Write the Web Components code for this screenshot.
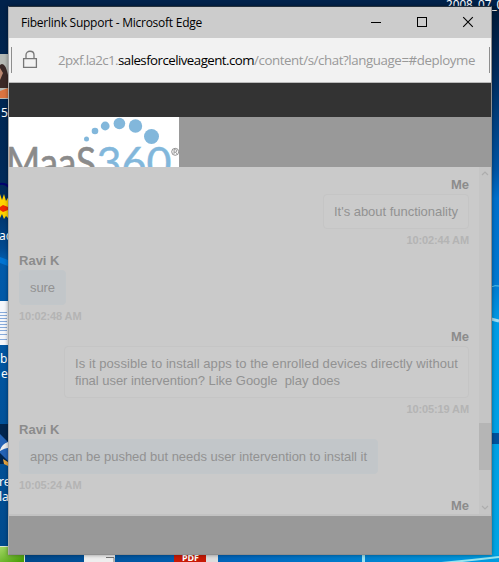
<!DOCTYPE html>
<html lang="en"><head><meta charset="utf-8"><title>Fiberlink Support</title>
<style>html,body{margin:0;width:499px;height:562px;overflow:hidden}</style></head>
<body><desk-top><browser-window></browser-window></desk-top>
<script>
const define=(name,html,ready)=>customElements.define(name,class extends HTMLElement{
  connectedCallback(){
    if(this.shadowRoot)return;
    const t=document.createElement('template');t.innerHTML=html;
    this.attachShadow({mode:'open'}).append(t.content.cloneNode(true));
    if(ready)ready.call(this,this.shadowRoot);
  }
});

// Text whose tracking is adjusted so it spans the width given in "w".
define('fit-text',`<style>:host{display:inline-block;white-space:pre}span{display:inline-block}</style><span><slot></slot></span>`,function(r){
  const s=r.querySelector('span'),w=+this.getAttribute('w');
  const n=this.textContent.length;
  s.style.letterSpacing=((w-s.getBoundingClientRect().width)/n)+'px';
});

define('title-bar',`<style>
:host{display:flex;height:31px;background:#ccc;align-items:center;color:#000;font:12px "Open Sans","Noto Sans",sans-serif}
fit-text{margin-left:12px;flex:1;line-height:30px}
svg{display:block}
</style><fit-text w="181">Fiberlink Support - Microsoft Edge</fit-text>
<svg width="129" height="31" fill="none" stroke="#000"><path d="M9 15.500h10M55.500 10.500h9v9h-9z" shape-rendering="crispEdges"/><path d="M101.200 10.200l9.600 9.600M110.800 10.200l-9.600 9.600" stroke-width="1.100"/></svg>`);

define('address-bar',`<style>
:host{display:flex;height:44px;box-sizing:content-box;background:#f2f2f2;border-bottom:1px solid #bababa;align-items:center;color:#999;font:13.300px "Open Sans","Noto Sans",sans-serif}
.edge{width:1px;height:26px;background:#8e8e8e;margin-left:2px;flex:none}
svg{flex:none;margin-left:8px}
.url{display:flex;width:418px;margin-left:20px;overflow:hidden;white-space:nowrap;line-height:24px}
.url fit-text{flex:none}
b{font-weight:400;color:#000;display:flex}
.r{margin-left:13px}
</style><i class="edge"></i>
<svg width="18" height="22" fill="none" stroke="#777" stroke-width="1.300"><path d="M3.600 9.600h12.800v8.800H3.600z"/><path d="M6 9.500V6c0-5 8-5 8 0v3.500"/></svg>
<div class="url"><fit-text w="60">2pxf.la2c1.</fit-text><b><fit-text w="136">salesforceliveagent.com</fit-text></b><fit-text w="221">/content/s/chat?language=#deployme</fit-text></div><i class="edge r"></i>`);

define('maas-logo',`<style>:host{display:block;width:170px;height:50px;background:#fff;overflow:hidden}svg{display:block}</style>
<svg width="170" height="50" font-family="Lato,sans-serif">
<g fill="#82b7db"><circle cx="77.500" cy="22" r="2.500"/><circle cx="86" cy="14" r="3.300"/><circle cx="96.200" cy="9" r="4.400"/><circle cx="110.400" cy="6.500" r="5.800"/><circle cx="126.500" cy="9" r="6.700"/><circle cx="142.500" cy="19.500" r="7.500"/></g>
<text x="-3" y="61" font-size="42" fill="#8b8b8b" stroke="#8b8b8b" stroke-width=".6" textLength="90" lengthAdjust="spacingAndGlyphs">MaaS</text>
<text x="87.500" y="60.500" font-size="42" fill="#82b7db" stroke="#82b7db" stroke-width=".4" textLength="75" lengthAdjust="spacingAndGlyphs">360</text>
<circle cx="166.200" cy="34.800" r="3.500" fill="none" stroke="#777" stroke-width=".8"/><path d="M165 37v-4.300h1.500q1.300 0 1.300 1.200t-1.300 1.200H165m1.500 0l1.500 1.900" fill="none" stroke="#777" stroke-width=".7"/></svg>`);

define('chat-message',`<style>
:host{display:flex;flex-direction:column;align-items:flex-start;height:76px;flex:none;color:#929292;font:13px/17px "Liberation Sans",Arial,sans-serif}
:host([me]){align-items:flex-end}
:host([tall]){height:93px}
.name{font-weight:700;font-size:13px;line-height:18px;color:#8c8c8c;height:18px}
.bubble{box-sizing:border-box;padding:8px 10px;border:1px solid #c2c7ca;border-radius:4px;background:#c2c6c9;display:flex;flex-direction:column;min-height:35px}
:host([me]) .bubble{background:#cbcbcb;border-color:#c5c5c5}
.time{font-size:11px;font-weight:700;line-height:22px;color:#b4b4b4}
</style><fit-text class="name"></fit-text><div class="bubble"><slot></slot></div><fit-text class="time" w="62"></fit-text>`,function(r){
  const me=this.hasAttribute('me'),n=r.querySelector('.name'),t=r.querySelector('.time');
  const fill=(el,text,w)=>{const f=document.createElement('fit-text');f.className=el.className;f.setAttribute('w',w);f.textContent=text;el.replaceWith(f)};
  fill(n,me?'Me':'Ravi K',me?18:40.500);
  fill(t,this.getAttribute('time'),62.500);
});

define('scroll-bar',`<style>:host{display:block;width:12px;background:#c5c5c5}svg{display:block}</style>
<svg width="12" height="347"><path fill="#b5b5b5" d="M0 256h12v47H0z"/><g fill="none" stroke="#adadad" stroke-width="1.200"><path d="M3 8l3-3 3 3M3 339l3 3 3-3"/></g></svg>`);

define('chat-log',`<style>
:host{display:flex;height:347px;background:#cacaca;overflow:hidden;border-bottom:2px solid #c2c2c2}
.list{flex:1;box-sizing:border-box;padding:9px 10px 0;display:flex;flex-direction:column}
</style><div class="list">
<chat-message me time="10:02:44 AM"><fit-text w="124">It's about functionality</fit-text></chat-message>
<chat-message time="10:02:48 AM"><fit-text w="25">sure</fit-text></chat-message>
<chat-message me tall time="10:05:19 AM"><fit-text w="383">Is it possible to install apps to the enrolled devices directly without</fit-text><fit-text w="265">final user intervention? Like Google  play does</fit-text></chat-message>
<chat-message time="10:05:24 AM"><fit-text w="337">apps can be pushed but needs user intervention to install it</fit-text></chat-message>
<chat-message me time=""></chat-message>
</div><scroll-bar></scroll-bar>`);

define('browser-window',`<style>
:host{display:flex;flex-direction:column;width:482px;height:547px;border:1px solid #8e8e8e;border-top-color:#26313c;border-left-color:#aaa;background:#999;box-shadow:0 0 4px #0006}
.band{height:34px;background:#333}
</style><title-bar></title-bar><address-bar></address-bar><div class="band"></div><maas-logo></maas-logo><chat-log></chat-log>`);

define('desk-top',`<style>
:host{display:block;position:relative;width:499px;height:562px;box-sizing:border-box;padding:6px 0 0 8px;overflow:hidden}
.bg{position:absolute;left:0;top:0}
slot{display:block;position:relative}
::slotted(*){position:relative}
</style>
<svg class="bg" width="499" height="562" font-family="Noto Sans,sans-serif" font-size="12" fill="#fff">
<defs><linearGradient id="l" x1="0" y1="0" x2="0" y2="1"><stop offset="0" stop-color="#00224a"/><stop offset=".35" stop-color="#002b5b"/><stop offset=".44" stop-color="#004a91"/><stop offset=".46" stop-color="#005bab"/><stop offset="1" stop-color="#004a8c"/></linearGradient>
<linearGradient id="r" x1="0" y1="0" x2="0" y2="1"><stop offset="0" stop-color="#001a38"/><stop offset=".12" stop-color="#002b5c"/><stop offset=".3" stop-color="#0055a5"/><stop offset=".35" stop-color="#0070cc"/><stop offset=".5" stop-color="#0078d0"/><stop offset=".58" stop-color="#009de6"/><stop offset="1" stop-color="#00a5e4"/></linearGradient>
<linearGradient id="b"><stop offset="0" stop-color="#004585"/><stop offset=".5" stop-color="#0068be"/><stop offset="1" stop-color="#009de0"/></linearGradient>
<linearGradient id="g" x2="1" y2="1"><stop stop-color="#a5d967"/><stop offset="1" stop-color="#419900"/></linearGradient></defs>
<path fill="#00224b" d="M0 0h499v8H0z"/><path fill="url(#l)" d="M0 6h9v550H0z"/><path fill="url(#r)" d="M490 6h9v550h-9z"/><path fill="url(#b)" d="M0 555h499v7H0z"/>
<text x="446" y="9" textLength="64" lengthAdjust="spacingAndGlyphs">2008_07_01</text>
<path fill="#b6bab5" d="M0 54h8v45H0z"/><path fill="#3a2927" d="M0 65q5-4 8 10v13H0z"/><path fill="#b98770" d="M0 68l3 5-3 7z"/><path fill="#db7440" d="M0 91l8-3v10H0z"/>
<text x="1" y="117">50</text><path fill="none" stroke="#00006f" stroke-width="2" d="M0 184q5-1 9 3"/>
<path fill="#ffd300" d="M0 194l2 6 2-6 2 7 3-5v23l-3-3-2 3-2-5-2 4z"/><path fill="#f02800" d="M0 207l3-2 5 2v3l-5 2-3-2z"/>
<text x="-1" y="240">ac</text><path fill="#0074d2" d="M0 257l8 3v6l-8-3z"/>
<path fill="#f4f6fa" d="M0 301h8v44H0z"/><path stroke="#87aadb" d="M0 312.500h7M0 315.500h7M0 318.500h7M0 321.500h7M0 324.500h7M0 327.500h7M0 330.500h7M0 334.500h7M0 339.500h7"/>
<text x="0" y="363">b</text><text x="1" y="378">e</text>
<path fill="#00254e" d="M0 424h8v40H0z"/><path fill="#2463b5" d="M0 434l8 8v19l-8-8z"/><path fill="#eee" d="M0 450q2-6 8-8v6q-3 0-8 3z"/><path fill="#e6a53f" d="M3 459l5 3v4l-4-2z"/>
<text x="-1" y="486">re</text><text x="-1" y="501">la</text>
<path fill="url(#g)" d="M0 546h9v9h15v7H0z"/><path stroke="#dce6c9" d="M0 546.500h9M24.500 555v7"/>
<path fill="#eee" d="M84 555h31v7H84z"/><path fill="none" stroke="#777" d="M106 557.500h8v5"/><path fill="#ddd" d="M206 555h12v7h-12z"/><path fill="#c71a06" d="M174 555h32v7h-32z"/><text x="182" y="561" font-size="9" font-weight="700" textLength="17">PDF</text>
<path stroke="#9be3f0" stroke-width="3" d="M363.500 555v7"/><path stroke="#98e4ee" stroke-width="2" fill="none" d="M430 564q35-3 69-7"/>
<path stroke="#5cc7ed" fill="none" d="M491 287q4-2 8-1"/><path stroke="#9fdcf2" stroke-width="3" d="M491 319l8 2"/>
<path fill="#00519c" d="M491 433h8v11h-8z"/></svg>
<slot></slot>`);
</script></body></html>
